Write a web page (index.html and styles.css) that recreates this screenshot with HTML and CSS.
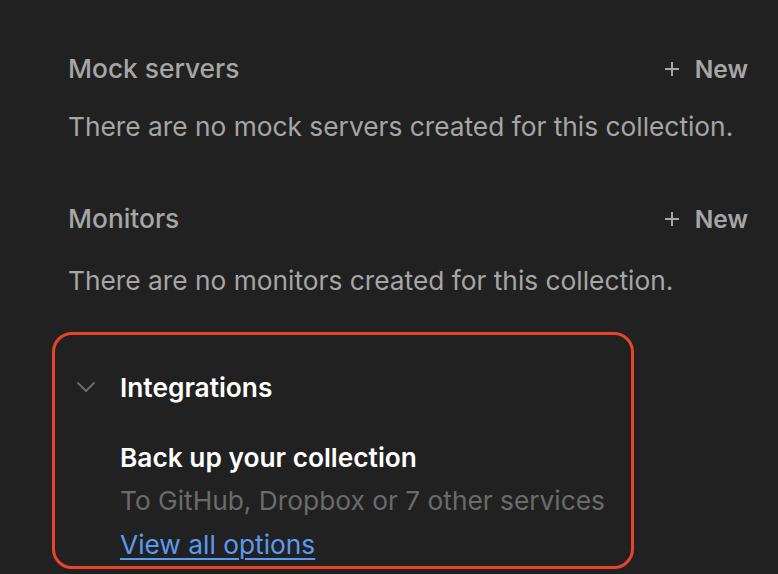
FILE: index.html
```html
<!DOCTYPE html>
<html lang="en">
<head>
<meta charset="utf-8">
<title>Collection</title>
<link rel="stylesheet" href="styles.css">
</head>
<body>
<main class="panel">
  <section class="section">
    <div class="section-head">
      <h2 class="section-title">Mock servers</h2>
      <button class="new-btn" type="button"><svg class="plus" width="16" height="16" viewBox="0 0 16 16" aria-hidden="true"><path d="M8 1 V15 M1 8 H15" stroke="#a6a6a6" stroke-width="2" fill="none"/></svg><span>New</span></button>
    </div>
    <p class="section-empty">There are no mock servers created for this collection.</p>
  </section>
  <section class="section section-monitors">
    <div class="section-head">
      <h2 class="section-title">Monitors</h2>
      <button class="new-btn" type="button"><svg class="plus" width="16" height="16" viewBox="0 0 16 16" aria-hidden="true"><path d="M8 1 V15 M1 8 H15" stroke="#a6a6a6" stroke-width="2" fill="none"/></svg><span>New</span></button>
    </div>
    <p class="section-empty section-empty-monitors">There are no monitors created for this collection.</p>
  </section>
  <section class="integrations">
    <div class="integrations-head">
      <svg class="chevron" width="18" height="10" viewBox="0 0 18 10" aria-hidden="true"><path d="M1 1 L9 9 L17 1" fill="none" stroke="#6b6b6b" stroke-width="2" stroke-linecap="round" stroke-linejoin="round"/></svg>
      <h2 class="integrations-title">Integrations</h2>
    </div>
    <div class="integrations-body">
      <h3 class="backup-title">Back up your collection</h3>
      <p class="backup-sub">To GitHub, Dropbox or 7 other services</p>
      <a class="backup-link" href="#">View all options</a>
    </div>
  </section>
</main>
</body>
</html>
```
FILE: styles.css
```css
* { box-sizing: border-box; }
html, body {
  margin: 0;
  padding: 0;
  background: #212121;
  height: 100%;
  overflow: hidden;
}
body {
  font-family: Inter, "Noto Sans", "Liberation Sans", sans-serif;
  color: #a6a6a6;
}
.panel {
  padding: 51px 30px 0 52px;
  display: flex;
  flex-direction: column;
}
.section {
  padding-left: 16px;
  display: flex;
  flex-direction: column;
}
.section-monitors {
  margin-top: 56px;
}
.section-head {
  display: flex;
  justify-content: space-between;
  align-items: center;
  height: 36px;
}
.section-title {
  margin: 0;
  font-size: 26.3px;
  font-weight: 500;
  line-height: 36px;
  color: #a6a6a6;
}
.new-btn {
  background: none;
  border: 0;
  padding: 0;
  display: flex;
  align-items: center;
  gap: 15px;
  font-family: inherit;
  font-size: 24.5px;
  font-weight: 600;
  line-height: 36px;
  color: #a6a6a6;
}
.plus { display: block; margin-top: -1px; }
.section-empty {
  margin: 22px 0 0;
  font-size: 26.3px;
  line-height: 36px;
  color: #a6a6a6;
}
.section-empty-monitors {
  margin-top: 26px;
}
.integrations {
  margin-top: 33px;
  width: 582px;
  border: 3px solid #e8442a;
  border-radius: 20px;
  padding: 35px 0 0 22px;
  height: 237px;
}
.integrations-head {
  display: flex;
  align-items: center;
  gap: 25px;
  height: 36px;
}
.chevron { display: block; margin-top: -2px; }
.integrations-title {
  margin: 0;
  font-size: 26.3px;
  font-weight: 600;
  line-height: 36px;
  color: #ffffff;
}
.integrations-body {
  padding-left: 43px;
  margin-top: 34px;
  display: flex;
  flex-direction: column;
  align-items: flex-start;
}
.backup-title {
  margin: 0;
  font-size: 26.3px;
  font-weight: 600;
  line-height: 36px;
  color: #ffffff;
}
.backup-sub {
  margin: 7px 0 0;
  font-size: 26.3px;
  line-height: 36px;
  color: #6b6b6b;
}
.backup-link {
  margin-top: 8px;
  font-size: 26.3px;
  line-height: 36px;
  color: #5a9bef;
  text-decoration: underline;
  text-decoration-thickness: 2px;
  text-underline-offset: 4px;
}
```
